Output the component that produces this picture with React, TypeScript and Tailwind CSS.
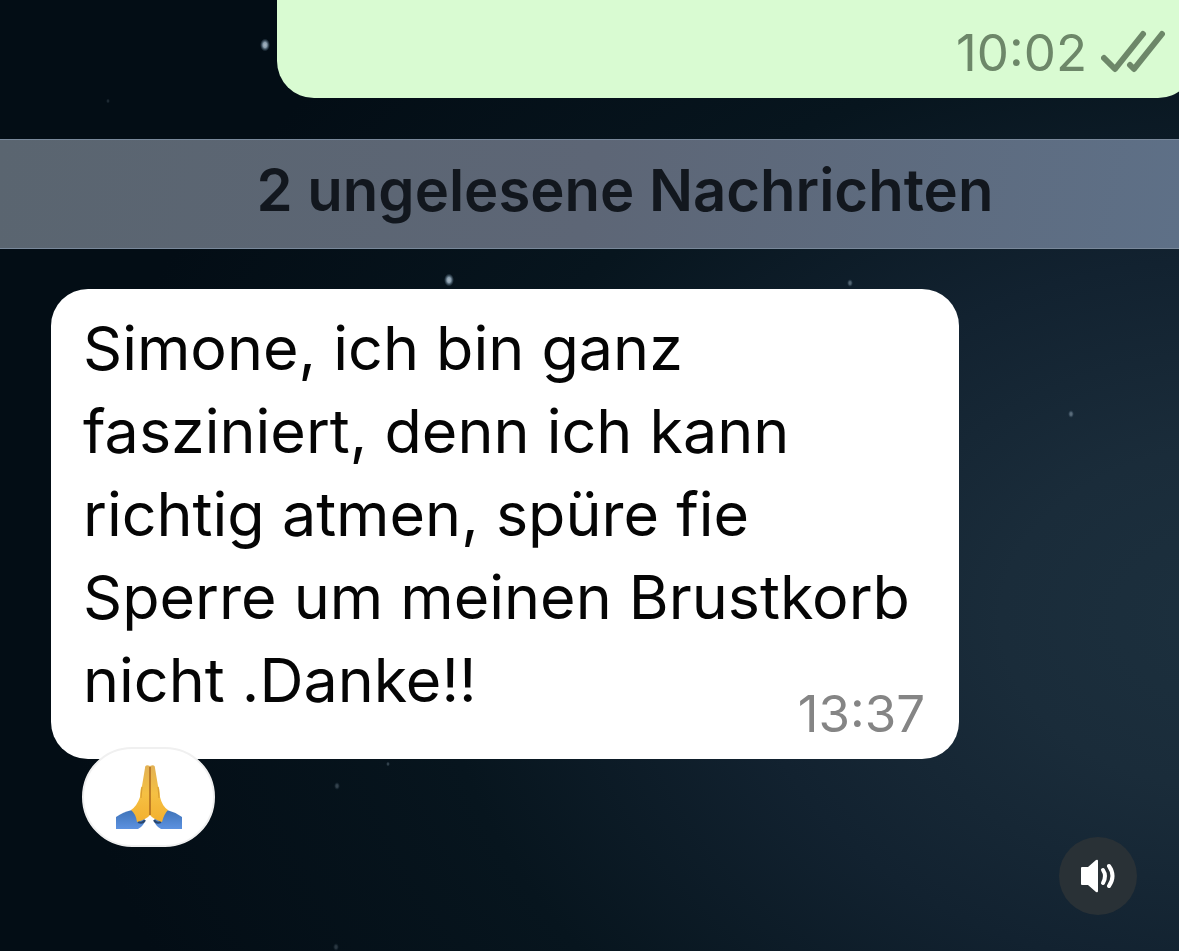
const stars = [
  { x: 265, y: 45, r: 5, opacity: 0.8 },
  { x: 449, y: 280, r: 5, opacity: 0.8 },
  { x: 850, y: 283, r: 3, opacity: 0.4 },
  { x: 1071, y: 414, r: 3, opacity: 0.4 },
  { x: 388, y: 764, r: 2, opacity: 0.25 },
  { x: 337, y: 786, r: 3, opacity: 0.25 },
  { x: 108, y: 101, r: 2, opacity: 0.15 },
  { x: 336, y: 947, r: 3, opacity: 0.2 },
];

function Stars() {
  return (
    <svg className="absolute inset-0 h-full w-full" aria-hidden="true">
      <defs>
        <radialGradient id="star">
          <stop offset="0" stopColor="#d5e3ee" />
          <stop offset="0.4" stopColor="#a9bfd0" />
          <stop offset="1" stopColor="#5d7b92" stopOpacity="0" />
        </radialGradient>
      </defs>
      {stars.map((s) => (
        <ellipse key={`${s.x}-${s.y}`} cx={s.x} cy={s.y} rx={s.r} ry={s.r * 1.3} fill="url(#star)" opacity={s.opacity} />
      ))}
    </svg>
  );
}

function ReadTicks() {
  return (
    <svg className="h-11 w-16" viewBox="0 0 64 44" fill="none" stroke="#6d8769" strokeWidth="6" strokeLinecap="round" strokeLinejoin="round" role="img" aria-label="Zugestellt">
      <path d="M3 28 L14 39 L42 4" />
      <path d="M29 35 L33 39 L61 4" />
    </svg>
  );
}

function FoldedHands() {
  return (
    <svg className="h-[66px] w-[66px]" viewBox="0 0 66 66" role="img" aria-label="Gefaltete Hände">
      <defs>
        <linearGradient id="hand" x1="0" y1="0" x2="0" y2="1">
          <stop offset="0" stopColor="#e2b154" />
          <stop offset="0.5" stopColor="#f5c043" />
          <stop offset="1" stopColor="#f3b02f" />
        </linearGradient>
        <linearGradient id="sleeve" x1="0" y1="0" x2="0" y2="1">
          <stop offset="0" stopColor="#3f73b8" />
          <stop offset="1" stopColor="#5c92e0" />
        </linearGradient>
      </defs>
      <path d="M0 53 Q7 48 16 46 L29 56 Q28 62 22 65 L0 65 Z" fill="url(#sleeve)" />
      <path d="M66 53 Q59 48 51 46 L38 56 Q39 62 45 65 L66 65 Z" fill="url(#sleeve)" />
      <path d="M22 58 Q27 60 29 56 M45 58 Q40 60 38 56" fill="none" stroke="#27466f" strokeWidth="2" />
      <path d="M34 2 Q29 0 29 4 L26 22 Q24 25 24 33 Q21 42 15 46 Q20 50 21 58 Q31 55 34 51 Z" fill="url(#hand)" />
      <path d="M34 2 Q39 0 39 4 L42 22 Q44 25 44 33 Q46 42 52 46 Q48 50 46 58 Q37 55 34 51 Z" fill="url(#hand)" />
      <path d="M34 3 L34 51" stroke="#ad681e" strokeWidth="1.5" />
      <path d="M26 23 L25 34 M42 23 L43 34" stroke="#d89c32" strokeWidth="1" />
    </svg>
  );
}

function SpeakerIcon() {
  return (
    <svg className="h-9 w-9" viewBox="0 0 36 36" fill="none" aria-hidden="true">
      <path d="M2 9 H8 L16 2 Q18 1 18 3 V33 Q18 35 16 34 L8 27 H2 Q1 27 1 26 V10 Q1 9 2 9 Z" fill="#fff" />
      <path d="M23 12 Q27 18 23 25" stroke="#fff" strokeWidth="4" strokeLinecap="round" />
      <path d="M29 8 Q36 18 29 28" stroke="#fff" strokeWidth="4" strokeLinecap="round" />
    </svg>
  );
}

export default function App() {
  return (
    <main className="relative min-h-screen overflow-hidden bg-[radial-gradient(ellipse_100%_90%_at_105%_65%,#1c303e_0%,#1a2c3a_20%,#122230_42%,#07151e_68%,#030d15_100%)] font-['Inter',sans-serif]">
      <Stars />
      <div className="relative">
        <section className="-mr-4 ml-[277px] flex h-[98px] items-end justify-end gap-[14px] rounded-b-[37px] bg-[#d9fbd2] pr-[30px] pb-6">
          <time className="text-[51px] leading-[42px] text-[#6d8769]">10:02</time>
          <ReadTicks />
        </section>

        <h2 className="mt-[41px] border-y border-[#79889a] bg-[linear-gradient(100deg,#5a6570_0%,#5d6676_50%,#5e7087_100%)] pt-[14px] pb-[22px] pl-[71px] text-center text-[58px] leading-[72px] font-semibold text-[#12171e]">
          2 ungelesene Nachrichten
        </h2>

        <article className="mt-10 ml-[51px] max-w-[908px] rounded-[37px] bg-white px-8 pt-[18px] pb-6">
          <p className="flow-root text-[61px] leading-[83px] text-[#050505]">
            Simone, ich bin ganz fasziniert, denn ich kann richtig atmen, spüre fie Sperre um meinen Brustkorb nicht .Danke!!
            <time className="float-right mt-[54px] mr-[2px] text-[51px] leading-[42px] text-[#858585]">13:37</time>
          </p>
        </article>

        <button className="-mt-3 ml-[82px] flex h-[100px] w-[133px] items-center justify-center rounded-[50px] border-2 border-[#f0f0f0] bg-white">
          <FoldedHands />
        </button>
      </div>

      <button aria-label="Ton" className="absolute right-[42px] bottom-9 flex h-[78px] w-[78px] items-center justify-center rounded-full bg-[#293136]">
        <SpeakerIcon />
      </button>
    </main>
  );
}
